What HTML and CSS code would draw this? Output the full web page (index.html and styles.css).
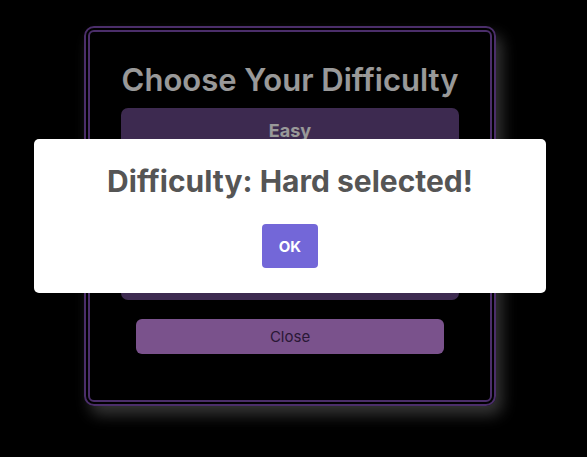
FILE: index.html
```html
<!DOCTYPE html>
<html>
<head>
<meta charset="utf-8">
<link rel="stylesheet" href="styles.css">
</head>
<body>
<div class="page">
  <div class="panel">
    <h2 class="panel-title">Choose Your Difficulty</h2>
    <div class="options">
      <button class="option">Easy</button>
      <button class="option">Medium</button>
      <button class="option">Hard</button>
    </div>
    <button class="close">Close</button>
  </div>
</div>
<div class="overlay">
  <div class="popup">
    <h2 class="popup-title">Difficulty: Hard selected!</h2>
    <button class="ok">OK</button>
  </div>
</div>
</body>
</html>
```
FILE: styles.css
```css
html, body {
  margin: 0;
  padding: 0;
  background: #000;
  font-family: "Inter", "Noto Sans", sans-serif;
}
.page {
  width: 580px;
  height: 432px;
  display: flex;
  align-items: center;
  justify-content: center;
}
.panel {
  box-sizing: border-box;
  width: 412px;
  height: 380px;
  border: 6px double #7d4eb1;
  border-radius: 10px;
  box-shadow: 6px 9px 15px rgba(255, 255, 255, 0.35);
  display: flex;
  flex-direction: column;
  align-items: center;
  padding-top: 30px;
}
.panel-title {
  margin: 0;
  font-size: 31px;
  line-height: 36px;
  font-weight: 600;
  color: #fff;
}
.options {
  margin-top: 10px;
  width: 338px;
  height: 192px;
  display: flex;
  flex-direction: column;
  gap: 12px;
}
.option {
  flex: 1;
  border: none;
  border-radius: 7px;
  background: #664685;
  color: #fff;
  font-family: inherit;
  font-size: 18px;
  font-weight: 700;
  padding: 0;
  display: flex;
  justify-content: center;
  align-items: flex-start;
  padding-top: 12px;
}
.close {
  margin-top: 19px;
  width: 308px;
  height: 35px;
  border: none;
  border-radius: 6px;
  background: #cc89ea;
  color: #46295a;
  font-family: inherit;
  font-size: 15px;
}
.overlay {
  position: fixed;
  inset: 0;
  background: rgba(0, 0, 0, 0.4);
}
.popup {
  position: absolute;
  left: 34px;
  top: 139px;
  box-sizing: border-box;
  width: 512px;
  height: 154px;
  background: #fff;
  border-radius: 5px;
  display: flex;
  flex-direction: column;
  align-items: center;
  padding-top: 24px;
}
.popup-title {
  margin: 0;
  font-size: 30px;
  line-height: 36px;
  font-weight: 700;
  color: #555;
}
.ok {
  margin-top: 25px;
  width: 56px;
  height: 44px;
  border: none;
  border-radius: 4px;
  background: #7367d8;
  color: #fff;
  font-family: inherit;
  font-size: 15px;
  font-weight: 700;
}
```
